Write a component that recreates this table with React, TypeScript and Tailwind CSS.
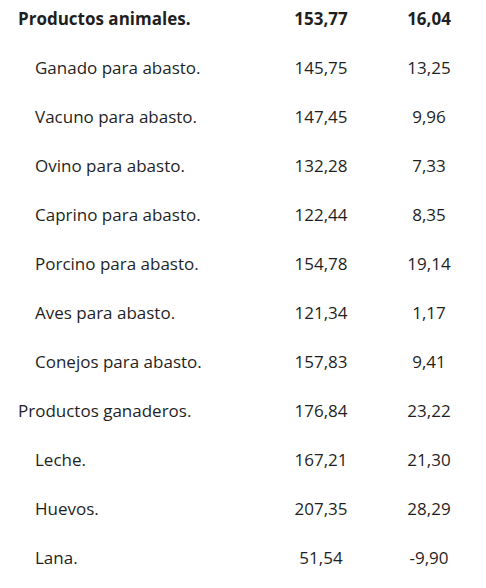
const rows: { label: string; a: string; b: string; level: 0 | 1; bold?: boolean }[] = [
  { label: "Productos animales.", a: "153,77", b: "16,04", level: 0, bold: true },
  { label: "Ganado para abasto.", a: "145,75", b: "13,25", level: 1 },
  { label: "Vacuno para abasto.", a: "147,45", b: "9,96", level: 1 },
  { label: "Ovino para abasto.", a: "132,28", b: "7,33", level: 1 },
  { label: "Caprino para abasto.", a: "122,44", b: "8,35", level: 1 },
  { label: "Porcino para abasto.", a: "154,78", b: "19,14", level: 1 },
  { label: "Aves para abasto.", a: "121,34", b: "1,17", level: 1 },
  { label: "Conejos para abasto.", a: "157,83", b: "9,41", level: 1 },
  { label: "Productos ganaderos.", a: "176,84", b: "23,22", level: 0 },
  { label: "Leche.", a: "167,21", b: "21,30", level: 1 },
  { label: "Huevos.", a: "207,35", b: "28,29", level: 1 },
  { label: "Lana.", a: "51,54", b: "-9,90", level: 1 },
];

export default function App() {
  return (
    <div className="min-h-screen bg-white text-[#1f1f1f] font-['Open_Sans',sans-serif] text-[17px]">
      <table className="w-[486px] table-fixed border-collapse -mt-[6px]">
        <colgroup>
          <col className="w-[270px]" />
          <col className="w-[102px]" />
          <col />
        </colgroup>
        <tbody>
          {rows.map((r) => (
            <tr key={r.label} className={r.bold ? "font-bold" : ""}>
              <td className={`h-[49px] p-0 ${r.level === 1 ? "pl-[35px]" : "pl-[18px]"}`}>{r.label}</td>
              <td className="h-[49px] p-0 text-center">{r.a}</td>
              <td className="h-[49px] p-0 text-center">{r.b}</td>
            </tr>
          ))}
        </tbody>
      </table>
    </div>
  );
}
